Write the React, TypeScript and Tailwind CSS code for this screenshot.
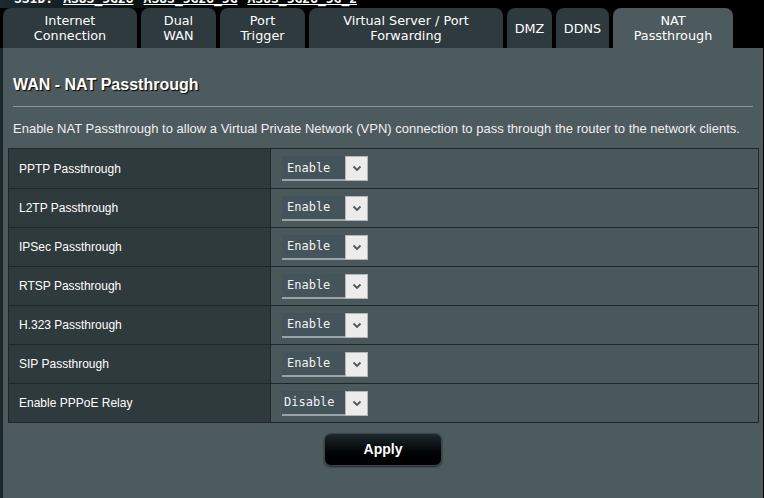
import React from "react";

const tabs = [
  { label: ["Internet", "Connection"], w: 134 },
  { label: ["Dual", "WAN"], w: 75 },
  { label: ["Port", "Trigger"], w: 85 },
  { label: ["Virtual Server / Port", "Forwarding"], w: 194 },
  { label: ["DMZ"], w: 45 },
  { label: ["DDNS"], w: 53 },
  { label: ["NAT", "Passthrough"], w: 120, active: true },
];

const rows = [
  ["PPTP Passthrough", "Enable"],
  ["L2TP Passthrough", "Enable"],
  ["IPSec Passthrough", "Enable"],
  ["RTSP Passthrough", "Enable"],
  ["H.323 Passthrough", "Enable"],
  ["SIP Passthrough", "Enable"],
  ["Enable PPPoE Relay", "Disable"],
];

function Select({ value }: { value: string }) {
  const wide = value === "Disable";
  return (
    <div className="flex h-[25px] items-stretch">
      <div
        className={`flex items-center w-[63px] bg-[#45535a] border-b-2 border-[#9aa4a8] text-[#f2f2f2] text-[12px] ${
          wide ? "pl-[2px]" : "pl-[5px]"
        }`}
        style={{ fontFamily: '"DejaVu Sans Mono", "Liberation Mono", monospace' }}
      >
        {value}
      </div>
      <div className="w-[23px] flex items-center justify-center bg-[#ececec] border border-[#b5b5b5]">
        <svg width="10" height="7" viewBox="0 0 10 7">
          <path d="M1.5 1.5 L5 5 L8.5 1.5" fill="none" stroke="#555" strokeWidth="1.8" />
        </svg>
      </div>
    </div>
  );
}

export default function App() {
  return (
    <div
      className="w-[764px] h-[498px] bg-black overflow-hidden flex flex-col"
      style={{ fontFamily: '"Liberation Sans", Arial, sans-serif' }}
    >
      <div className="h-[8px] overflow-hidden pl-[14px] bg-gradient-to-r from-[#1c2a2d] via-black to-black">
        <div
          className="mt-[-8px] text-[13px] font-bold text-white leading-[13px] flex gap-[10px]"
          style={{ fontFamily: '"DejaVu Sans Mono", monospace' }}
        >
          <span>SSID:</span>
          <span className="underline">ASUS_5G28</span>
          <span className="underline">ASUS_5G28_5G</span>
          <span className="underline">ASUS_5G28_5G_2</span>
        </div>
      </div>
      <div className="flex h-[40px] gap-[4px] pl-[3px] bg-black">
        {tabs.map((t, i) => (
          <div
            key={i}
            className={`flex flex-col items-center justify-center rounded-t-[8px] text-white text-[12.8px] leading-[15px] text-center ${
              t.active ? "bg-[#4d5a5e]" : "bg-[#2e3a3d]"
            }`}
            style={{ width: t.w, fontFamily: '"DejaVu Sans", Verdana, sans-serif' }}
          >
            {t.label.map((l, j) => (
              <span key={j}>{l}</span>
            ))}
          </div>
        ))}
      </div>
      <div className="flex flex-1">
        <div className="w-[3px] bg-[#1c2729]" />
        <div className="w-[760px] bg-[#4d5a5e] flex flex-col">
          <div
            className="pl-[10px] pt-[27px] text-[16px] font-bold text-white leading-[20px]"
            style={{ textShadow: "1px 1px 1px #000" }}
          >
            WAN - NAT Passthrough
          </div>
          <div className="mx-[10px] mt-[11px] h-[1px] bg-[#8c989b]" />
          <div className="pl-[10px] pt-[14px] text-[13px] text-[#f0f0f0] leading-[15px]">
            Enable NAT Passthrough to allow a Virtual Private Network (VPN) connection to pass through the router to the network clients.
          </div>
          <div className="ml-[5px] mt-[12px] w-[751px] border border-[#1e2629]">
            {rows.map(([label, value], i) => (
              <div
                key={i}
                className={`flex h-[39px] ${i > 0 ? "border-t border-[#1e2629]" : ""}`}
              >
                <div className="w-[262px] bg-[#2f3a3d] border-r border-[#1e2629] flex items-center pl-[10px] text-[12px] text-white">
                  {label}
                </div>
                <div className="flex-1 bg-[#4a585c] flex items-center pl-[11px]">
                  <Select value={value} />
                </div>
              </div>
            ))}
          </div>
          <div className="flex justify-center pt-[10px]">
            <button
              className="w-[118px] h-[33px] rounded-[7px] border border-[#39454a] bg-gradient-to-b from-[#1e2a2e] to-black text-white text-[14px] font-bold"
              style={{ boxShadow: "0 1px 2px rgba(0,0,0,0.6)" }}
            >
              Apply
            </button>
          </div>
        </div>
      </div>
    </div>
  );
}
